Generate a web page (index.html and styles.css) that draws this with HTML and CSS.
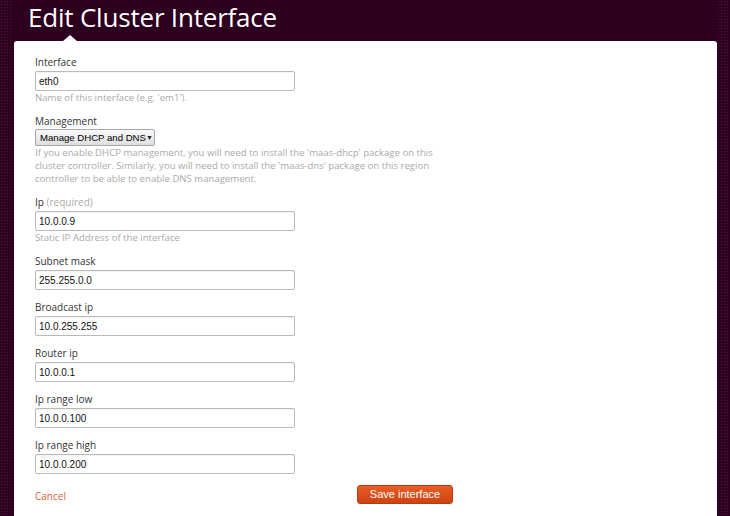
FILE: index.html
```html
<!DOCTYPE html>
<html>
<head>
<meta charset="utf-8">
<title>Edit Cluster Interface</title>
<link rel="stylesheet" href="styles.css">
</head>
<body>
<div class="page">
  <h1 class="title">Edit Cluster Interface</h1>
  <div class="card">
    <form class="form">
      <div class="field">
        <label class="label">Interface</label>
        <input class="input" type="text" value="eth0">
        <p class="help">Name of this interface (e.g. 'em1').</p>
      </div>
      <div class="field">
        <label class="label">Management</label>
        <div class="select"><span>Manage DHCP and DNS</span><span class="caret">▼</span></div>
        <p class="help">If you enable DHCP management, you will need to install the 'maas-dhcp' package on this<br>cluster controller. Similarly, you will need to install the 'maas-dns' package on this region<br>controller to be able to enable DNS management.</p>
      </div>
      <div class="field">
        <label class="label">Ip <span class="req">(required)</span></label>
        <input class="input" type="text" value="10.0.0.9">
        <p class="help">Static IP Address of the interface</p>
      </div>
      <div class="field">
        <label class="label">Subnet mask</label>
        <input class="input" type="text" value="255.255.0.0">
      </div>
      <div class="field">
        <label class="label">Broadcast ip</label>
        <input class="input" type="text" value="10.0.255.255">
      </div>
      <div class="field">
        <label class="label">Router ip</label>
        <input class="input" type="text" value="10.0.0.1">
      </div>
      <div class="field">
        <label class="label">Ip range low</label>
        <input class="input" type="text" value="10.0.0.100">
      </div>
      <div class="field">
        <label class="label">Ip range high</label>
        <input class="input" type="text" value="10.0.0.200">
      </div>
      <div class="actions">
        <a class="cancel" href="#">Cancel</a>
        <button class="save" type="button">Save interface</button>
      </div>
    </form>
  </div>
</div>
</body>
</html>
```
FILE: styles.css
```css
html, body {
  margin: 0;
  padding: 0;
  height: 100%;
}
body {
  background-color: #2c001e;
  background-image: radial-gradient(circle, #4a1a3b 0.7px, transparent 1px);
  background-size: 3px 3px;
  font-family: "Open Sans", "Noto Sans", sans-serif;
  overflow: hidden;
}
.page {
  margin: 0 13px;
  background: #2c001e;
  height: 100%;
  display: flex;
  flex-direction: column;
}
.title {
  margin: 0;
  padding: 2px 0 0 15px;
  height: 39px;
  flex: none;
  line-height: 30px;
  font-weight: normal;
  font-size: 26px;
  color: #fff;
  font-family: "Open Sans", sans-serif;
  letter-spacing: -0.2px;
}
.card {
  position: relative;
  flex: 1;
  margin-left: 1px;
  background: #fff;
  border-radius: 3px 3px 0 0;
  padding: 14px 21px 0;
}
.card::before {
  content: "";
  position: absolute;
  left: 49px;
  top: -6px;
  border-left: 7px solid transparent;
  border-right: 7px solid transparent;
  border-bottom: 6px solid #fff;
}
.form {
  display: flex;
  flex-direction: column;
}
.field {
  display: flex;
  flex-direction: column;
  align-items: flex-start;
  margin-bottom: 10px;
}
.label {
  font-size: 10px;
  line-height: 14px;
  color: #333;
  margin-bottom: 2px;
}
.req {
  color: #aaa;
}
.input {
  box-sizing: border-box;
  width: 260px;
  height: 20px;
  margin: 0;
  padding: 1px 3px 0;
  border: 1px solid #b9b9b9;
  border-radius: 2px;
  font-family: "Liberation Sans", Arial, sans-serif;
  font-size: 10px;
  color: #111;
  background: #fff;
  box-shadow: inset 0 1px 1px rgba(0,0,0,0.05);
}
.help {
  margin: 0;
  font-size: 9.6px;
  line-height: 13px;
  color: #aaa;
}
.select {
  box-sizing: border-box;
  width: 120px;
  height: 17px;
  margin-top: -1px;
  display: flex;
  align-items: center;
  justify-content: space-between;
  padding: 0 4px 0 4px;
  border: 1px solid #a7a7a7;
  border-radius: 2px;
  background: linear-gradient(#fafafa, #dedede);
  font-family: "Liberation Sans", Arial, sans-serif;
  font-size: 9.6px;
  white-space: nowrap;
  color: #000;
}
.caret {
  font-size: 7px;
  color: #222;
}
.actions {
  display: flex;
  align-items: center;
  margin-top: 1px;
  height: 20px;
}
.cancel {
  width: 322px;
  font-size: 10px;
  color: #e0602f;
  text-decoration: none;
  padding-top: 2px;
}
.save {
  box-sizing: border-box;
  width: 96px;
  height: 19px;
  margin-top: -2px;
  padding: 0;
  border: 1px solid #b63c0f;
  border-radius: 3px;
  background: linear-gradient(#e85d26, #cd4312);
  color: #fff;
  font-family: "Liberation Sans", Arial, sans-serif;
  font-size: 11px;
}
```
